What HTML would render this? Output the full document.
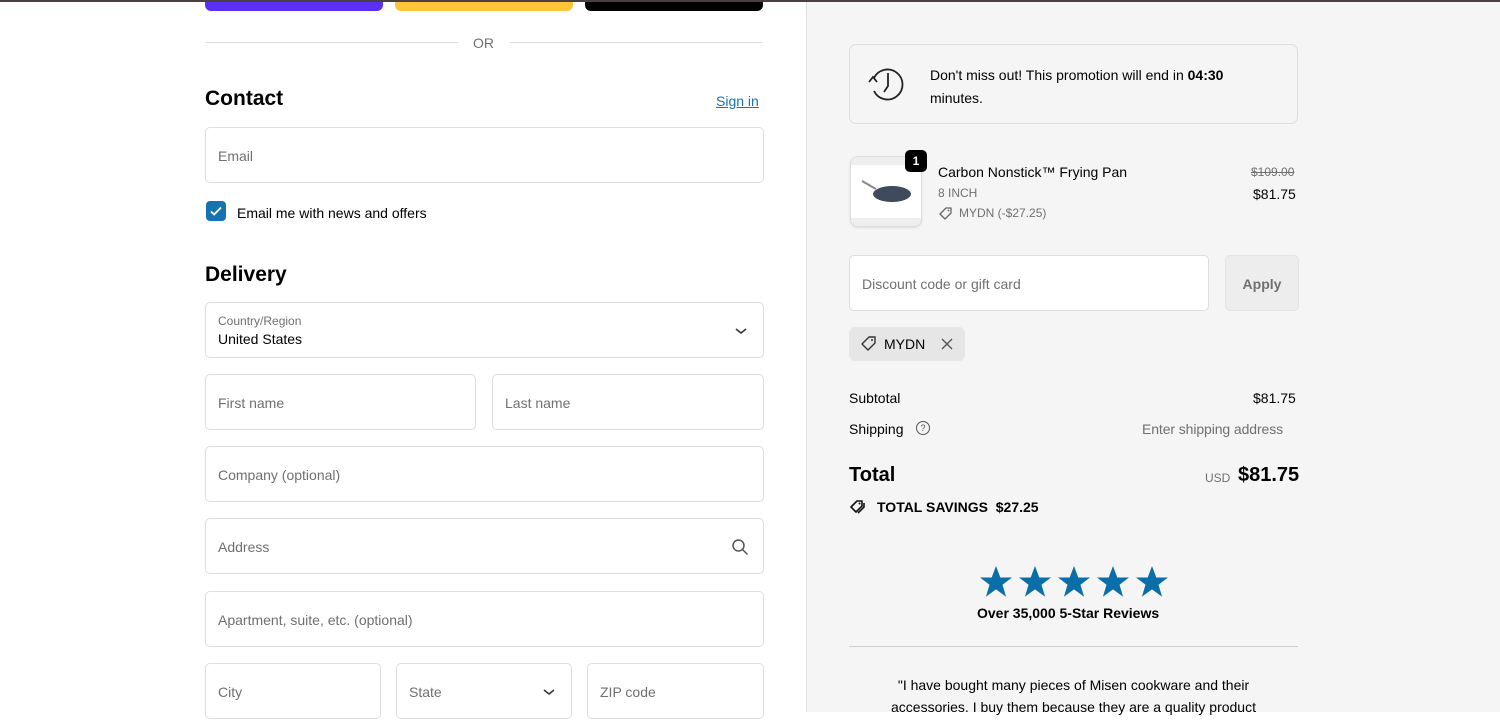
<!DOCTYPE html><html><head><style>
*{box-sizing:border-box;margin:0;padding:0}
body{width:1500px;height:712px;overflow:hidden;font-family:"Liberation Sans",sans-serif;color:#000;background:#fff;position:relative}
.topbar{position:absolute;left:0;top:0;width:1500px;height:2px;background:#4a4040;z-index:5}
.right{position:absolute;left:806px;top:0;width:694px;height:712px;background:#f5f5f5;border-left:1px solid #e0e0e0}
.a{position:absolute}
.in{position:absolute;border:1px solid #dedede;border-radius:5px;background:#fff;height:56px;font-size:14px;color:#707070;padding-left:12px;line-height:56px}
.h{font-size:21px;font-weight:bold}
.t14{font-size:14px}
</style></head><body>
<div class="topbar"></div>
<div class="a" style="left:205px;top:0;width:178px;height:11px;background:#5a31f4;border-radius:0 0 6px 6px"></div>
<div class="a" style="left:395px;top:0;width:178px;height:11px;background:#ffc439;border-radius:0 0 6px 6px"></div>
<div class="a" style="left:585px;top:0;width:178px;height:11px;background:#000;border-radius:0 0 6px 6px"></div>
<div class="a" style="left:205px;top:42px;width:253px;height:1px;background:#dedede"></div>
<div class="a" style="left:510px;top:42px;width:253px;height:1px;background:#dedede"></div>
<div class="a t14" style="left:473px;top:35px;color:#707070">OR</div>
<div class="a h" style="left:205px;top:87px">Contact</div>
<div class="a" style="left:716px;top:93px;font-size:14px;color:#1773b0;text-decoration:underline">Sign in</div>
<div class="in" style="left:205px;top:127px;width:559px">Email</div>
<div class="a" style="left:206px;top:201px;width:20px;height:20px;background:#1773b0;border-radius:4px"><svg width="20" height="20"><path d="M5 10.5l3.2 3L15 6.5" stroke="#fff" stroke-width="1.8" fill="none"/></svg></div>
<div class="a t14" style="left:237px;top:205px">Email me with news and offers</div>
<div class="a h" style="left:205px;top:263px">Delivery</div>
<div class="in" style="left:205px;top:302px;width:559px;line-height:normal;padding-top:11px"><div style="font-size:12px;color:#707070">Country/Region</div><div style="color:#000;margin-top:3px">United States</div>
<svg class="a" style="right:16px;top:23px" width="12" height="10"><path d="M1 3l5 4 5-4" stroke="#333" stroke-width="1.5" fill="none"/></svg></div>
<div class="in" style="left:205px;top:374px;width:271px">First name</div>
<div class="in" style="left:492px;top:374px;width:272px">Last name</div>
<div class="in" style="left:205px;top:446px;width:559px">Company (optional)</div>
<div class="in" style="left:205px;top:518px;width:559px">Address<svg class="a" style="right:14px;top:19px" width="18" height="18"><circle cx="7.5" cy="7.5" r="5.5" stroke="#555" stroke-width="1.5" fill="none"/><path d="M11.5 11.5l5 5" stroke="#555" stroke-width="1.5"/></svg></div>
<div class="in" style="left:205px;top:591px;width:559px">Apartment, suite, etc. (optional)</div>
<div class="in" style="left:205px;top:663px;width:176px">City</div>
<div class="in" style="left:396px;top:663px;width:176px">State<svg class="a" style="right:16px;top:23px" width="12" height="10"><path d="M1 3l5 4 5-4" stroke="#333" stroke-width="1.5" fill="none"/></svg></div>
<div class="in" style="left:587px;top:663px;width:177px">ZIP code</div>

<div class="right"></div>
<div class="a" style="left:849px;top:44px;width:449px;height:80px;border:1px solid #dedede;border-radius:7px;background:#f5f5f5"></div>
<svg class="a" style="left:866px;top:64px" width="42" height="40"><path d="M8 14 A15 15 0 1 1 8 27" stroke="#222" stroke-width="1.8" fill="none"/><path d="M3 18l4-5 4 5" stroke="#222" stroke-width="1.8" fill="none"/><path d="M22 9v13l-4 6" stroke="#222" stroke-width="1.8" fill="none"/></svg>
<div class="a t14" style="left:930px;top:64px;line-height:23px">Don't miss out! This promotion will end in <b>04:30</b><br>minutes.</div>
<div class="a" style="left:850px;top:156px;width:72px;height:71px;border:1px solid #ddd;border-radius:8px;background:#fff;overflow:hidden;box-shadow:0 1px 2px rgba(0,0,0,.1)"><div style="background:#eee;height:8px"></div><div class="a" style="left:22px;top:29px;width:38px;height:16px;border-radius:50%;background:#3f4a5c"></div><div class="a" style="left:10px;top:27px;width:16px;height:2px;background:#888;transform:rotate(30deg)"></div><div class="a" style="left:0;bottom:0;width:100%;height:8px;background:#eee"></div></div>
<div class="a" style="left:905px;top:150px;width:22px;height:22px;background:#000;border-radius:5px;color:#fff;font-size:12px;font-weight:bold;text-align:center;line-height:22px">1</div>
<div class="a t14" style="left:938px;top:164px">Carbon Nonstick™ Frying Pan</div>
<div class="a" style="left:938px;top:186px;font-size:12px;color:#707070">8 INCH</div>
<svg class="a" style="left:938px;top:206px" width="16" height="15"><path d="M2 8l6-6h5v5l-6 6z" stroke="#666" stroke-width="1.3" fill="none" stroke-linejoin="round"/><circle cx="10.5" cy="4.5" r=".9" fill="#666"/></svg>
<div class="a" style="left:959px;top:206px;font-size:12px;color:#707070">MYDN (-$27.25)</div>
<div class="a" style="left:1251px;top:165px;font-size:12px;color:#707070;text-decoration:line-through">$109.00</div>
<div class="a t14" style="left:1253px;top:186px">$81.75</div>
<div class="in" style="left:849px;top:255px;width:360px">Discount code or gift card</div>
<div class="a" style="left:1225px;top:255px;width:74px;height:56px;border:1px solid #e3e3e3;border-radius:5px;background:#ededed;color:#707070;font-size:14px;font-weight:bold;text-align:center;line-height:56px">Apply</div>
<div class="a" style="left:849px;top:327px;width:116px;height:34px;background:#e6e6e6;border-radius:6px"></div>
<svg class="a" style="left:859px;top:335px" width="20" height="18"><path d="M3 9l7-7h6v6l-7 7z" stroke="#333" stroke-width="1.4" fill="none" stroke-linejoin="round"/><circle cx="13" cy="5" r="1" fill="#333"/></svg>
<div class="a t14" style="left:884px;top:336px">MYDN</div>
<svg class="a" style="left:940px;top:337px" width="14" height="14"><path d="M2 2l10 10M12 2L2 12" stroke="#555" stroke-width="1.4"/></svg>
<div class="a t14" style="left:849px;top:390px">Subtotal</div>
<div class="a t14" style="left:1253px;top:390px">$81.75</div>
<div class="a t14" style="left:849px;top:421px">Shipping</div>
<div class="a" style="left:916px;top:421px;width:14px;height:14px;border:1.3px solid #555;border-radius:50%;font-size:9px;text-align:center;line-height:12px;color:#555">?</div>
<div class="a t14" style="left:1142px;top:421px;color:#707070;letter-spacing:-.1px">Enter shipping address</div>
<div class="a h" style="left:849px;top:464px;font-size:20px">Total</div>
<div class="a" style="left:1205px;top:471px;font-size:12px;color:#707070">USD</div>
<div class="a" style="left:1238px;top:464px;font-size:20px;font-weight:bold">$81.75</div>
<svg class="a" style="left:849px;top:498px" width="22" height="18"><path d="M2 9l6-6h5v5l-6 6z" stroke="#111" stroke-width="1.6" fill="none" stroke-linejoin="round"/><path d="M15 5v4l-6 6" stroke="#111" stroke-width="1.6" fill="none"/><circle cx="10.5" cy="5.5" r="1" fill="#111"/></svg>
<div class="a t14" style="left:877px;top:499px;font-weight:bold">TOTAL SAVINGS &nbsp;$27.25</div>
<svg class="a" style="left:978px;top:565px" width="192" height="36"><g fill="#0a6ea8">
<path id="s" d="M18 1l4.3 11.5H34l-9.5 7.2 3.6 12L18 24.4 7.9 31.7l3.6-12L2 12.5h11.7z"/>
<use href="#s" x="39"/><use href="#s" x="78"/><use href="#s" x="117"/><use href="#s" x="156"/></g></svg>
<div class="a t14" style="left:977px;top:605px;font-weight:bold;font-size:14px">Over 35,000 5-Star Reviews</div>
<div class="a" style="left:849px;top:646px;width:449px;height:1px;background:#d0d0d0"></div>
<div class="a" style="left:869px;top:674px;width:409px;text-align:center;font-size:14px;line-height:22px">"I have bought many pieces of Misen cookware and their accessories. I buy them because they are a quality product</div>
</body></html>
